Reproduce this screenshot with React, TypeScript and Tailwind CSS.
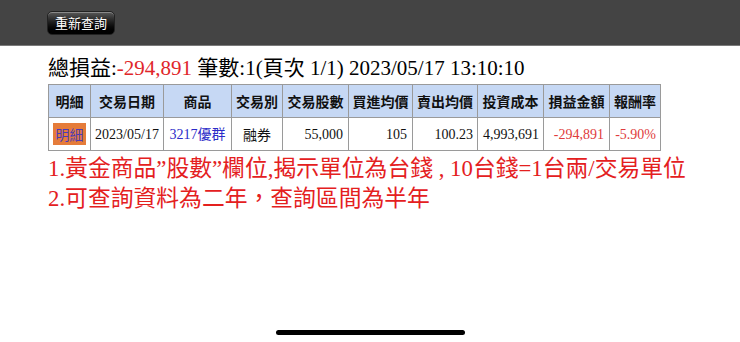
import React from "react";

const serif = { fontFamily: '"Liberation Serif", "Noto Sans CJK TC", serif' };

const headers = ["明細", "交易日期", "商品", "交易別", "交易股數", "買進均價", "賣出均價", "投資成本", "損益金額", "報酬率"];
const widths = [42, 73, 68, 51, 66, 64, 65, 66, 66, 51];

export default function App() {
  return (
    <div className="w-[740px] h-[342px] bg-white overflow-hidden relative" style={serif}>
      <div className="h-[46px] bg-[#444444] border-b border-[#7a7a7a] flex items-center pl-[47px]">
        <button
          className="h-[24px] px-[7px] rounded-[5px] border border-[#222] text-white text-[13px] leading-none bg-gradient-to-b from-[#5a5a5a] via-[#1a1a1a] to-[#000] shadow-[inset_0_1px_0_rgba(255,255,255,0.3)] [text-shadow:0_1px_1px_rgba(0,0,0,0.8)]"
          style={{ fontFamily: '"Noto Sans CJK TC", sans-serif' }}
        >
          重新查詢
        </button>
      </div>
      <div className="pl-[48px]">
        <div className="pt-[8px] text-[21px] leading-[28px] text-black whitespace-nowrap">
          總損益:<span className="text-[#e0262a]">-294,891</span> 筆數:1(頁次 1/1) 2023/05/17 13:10:10
        </div>
        <table className="mt-[2px] border-collapse table-fixed w-[612px] text-[14px]">
          <colgroup>
            {widths.map((w, i) => (
              <col key={i} style={{ width: w }} />
            ))}
          </colgroup>
          <thead>
            <tr className="h-[33px] bg-[#c6d8f4]">
              {headers.map((h) => (
                <th
                  key={h}
                  className="border border-[#9a9a9a] text-[14px] font-bold text-[#111] p-0 text-center whitespace-nowrap"
                  style={{ fontFamily: '"Noto Sans CJK TC", sans-serif' }}
                >
                  {h}
                </th>
              ))}
            </tr>
          </thead>
          <tbody>
            <tr className="h-[33px] text-[#111]">
              <td className="border border-[#9a9a9a] p-0">
                <div className="flex justify-center">
                  <span
                    className="w-[33px] h-[22px] bg-[#e57c3a] text-[#4a3ab8] text-[14px] leading-[22px] text-center"
                    style={{ fontFamily: '"Noto Sans CJK TC", sans-serif' }}
                  >
                    明細
                  </span>
                </div>
              </td>
              <td className="border border-[#9a9a9a] text-center p-0">2023/05/17</td>
              <td className="border border-[#9a9a9a] text-center p-0 text-[#2b2bc8]">3217優群</td>
              <td className="border border-[#9a9a9a] text-center p-0" style={{ fontFamily: '"Noto Sans CJK TC", sans-serif' }}>融券</td>
              <td className="border border-[#9a9a9a] text-right pr-[5px]">55,000</td>
              <td className="border border-[#9a9a9a] text-right pr-[5px]">105</td>
              <td className="border border-[#9a9a9a] text-right pr-[4px]">100.23</td>
              <td className="border border-[#9a9a9a] text-right pr-[4px]">4,993,691</td>
              <td className="border border-[#9a9a9a] text-right pr-[5px] text-[#e03c3c]">-294,891</td>
              <td className="border border-[#9a9a9a] text-right pr-[4px] text-[#e03c3c]">-5.90%</td>
            </tr>
          </tbody>
        </table>
        <div className="mt-[3px] text-[#e4201e] text-[22.8px] leading-[30px] whitespace-nowrap">
          <div>1.黃金商品”股數”欄位,揭示單位為台錢 , 10台錢=1台兩/交易單位</div>
          <div>2.可查詢資料為二年，查詢區間為半年</div>
        </div>
      </div>
      <div className="absolute left-[276px] top-[330px] w-[189px] h-[5px] rounded-full bg-black" />
    </div>
  );
}
